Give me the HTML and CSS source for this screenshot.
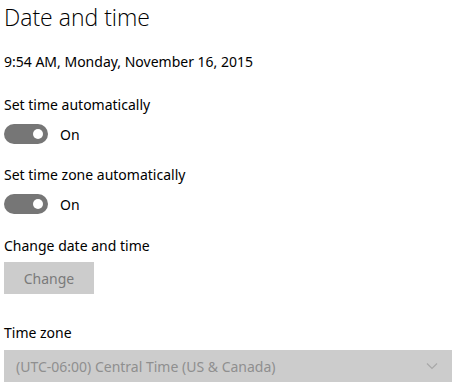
FILE: index.html
```html
<!DOCTYPE html>
<html>
<head>
<meta charset="utf-8">
<link rel="stylesheet" href="styles.css">
</head>
<body>
<div class="page">
  <h1 class="title">Date and time</h1>
  <div class="now">9:54 AM, Monday, November 16, 2015</div>

  <div class="label l1">Set time automatically</div>
  <div class="toggle-row">
    <span class="toggle"><span class="knob"></span></span>
    <span class="state">On</span>
  </div>

  <div class="label l2">Set time zone automatically</div>
  <div class="toggle-row">
    <span class="toggle"><span class="knob"></span></span>
    <span class="state">On</span>
  </div>

  <div class="label l3">Change date and time</div>
  <div class="btn">Change</div>

  <div class="label l4">Time zone</div>
  <div class="select">
    <span class="select-text">(UTC-06:00) Central Time (US &amp; Canada)</span>
    <svg class="chev" width="12" height="8" viewBox="0 0 12 8"><path d="M1 1.5 L6 6.5 L11 1.5" fill="none" stroke="#a8a8a8" stroke-width="1.2"/></svg>
  </div>
</div>
</body>
</html>
```

FILE: styles.css
```css
html, body {
  margin: 0;
  padding: 0;
  background: #fff;
}
body {
  font-family: "Noto Sans", "Open Sans", sans-serif;
  color: #000;
  width: 461px;
  height: 391px;
  overflow: hidden;
}
.page {
  padding: 0 0 0 4px;
  display: flex;
  flex-direction: column;
  align-items: flex-start;
}
.title {
  margin: 0;
  font-weight: 300;
  font-size: 23px;
  line-height: 32px;
  margin-top: 1px;
  font-family: "Open Sans", "Noto Sans", sans-serif;
}
.now {
  font-size: 14px;
  line-height: 20px;
  margin-top: 19px;
}
.label {
  font-size: 14px;
  line-height: 20px;
}
.l1 { margin-top: 23px; }
.l2 { margin-top: 21px; }
.l3 { margin-top: 22px; }
.l4 { margin-top: 29px; }
.toggle-row {
  display: flex;
  align-items: center;
  margin-top: 9px;
  height: 20px;
}
.toggle {
  width: 44px;
  height: 20px;
  border-radius: 10px;
  background: #767676;
  display: flex;
  align-items: center;
  justify-content: flex-end;
  padding-right: 5px;
  box-sizing: border-box;
}
.knob {
  width: 10px;
  height: 10px;
  border-radius: 50%;
  background: #fff;
}
.state {
  font-size: 14px;
  margin-left: 12px;
}
.btn {
  margin-top: 6px;
  width: 90px;
  height: 32px;
  background: #cccccc;
  color: #7a7a7a;
  font-size: 14px;
  display: flex;
  align-items: center;
  justify-content: center;
}
.select {
  margin-top: 7px;
  width: 448px;
  height: 32px;
  background: #cccccc;
  display: flex;
  align-items: center;
  justify-content: space-between;
  padding: 0 14px 0 12px;
  box-sizing: border-box;
}
.select-text {
  color: #8f8f8f;
  font-size: 14px;
}
.chev { display: block; }
```
